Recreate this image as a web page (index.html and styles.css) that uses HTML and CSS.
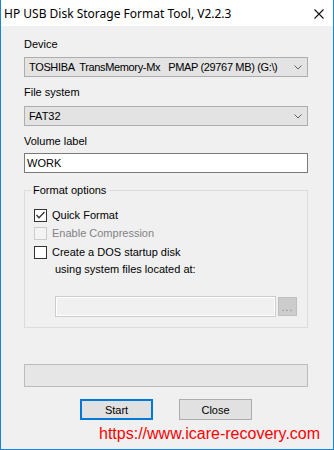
FILE: index.html
```html
<!DOCTYPE html>
<html lang="en">
<head>
    <meta charset="UTF-8">
    <title>HP USB Disk Storage Format Tool</title>
    <link rel="stylesheet" href="styles.css">
</head>
<body>

<div class="window">
    <div class="titlebar">
        <span class="title">HP USB Disk Storage Format Tool, V2.2.3</span>
        <svg class="close-icon" width="10" height="10" viewBox="0 0 10 10">
            <path d="M0.5 0.5 L9.5 9.5 M9.5 0.5 L0.5 9.5" stroke="#111" stroke-width="1.1" fill="none"/>
        </svg>
    </div>

    <div class="dialog">
        <div class="label first">Device</div>
        <div class="combo">
            <span class="combo-text device">TOSHIBA  TransMemory-Mx   PMAP (29767 MB) (G:\)</span>
            <svg class="chevron" width="8" height="5" viewBox="0 0 8 5">
                <path d="M0.5 0.5 L4 4 L7.5 0.5" stroke="#606060" stroke-width="1" fill="none"/>
            </svg>
        </div>

        <div class="label">File system</div>
        <div class="combo">
            <span class="combo-text">FAT32</span>
            <svg class="chevron" width="8" height="5" viewBox="0 0 8 5">
                <path d="M0.5 0.5 L4 4 L7.5 0.5" stroke="#606060" stroke-width="1" fill="none"/>
            </svg>
        </div>

        <div class="label">Volume label</div>
        <div class="textbox">WORK</div>

        <!-- Format options -->
        <fieldset class="group">
            <legend>Format options</legend>
            <div class="check-row row-1">
                <span class="checkbox">
                    <svg width="11" height="11" viewBox="0 0 11 11">
                        <path d="M1.5 5 L4 7.8 L9.5 2" stroke="#333" stroke-width="1.3" fill="none"/>
                    </svg>
                </span>
                <span>Quick Format</span>
            </div>
            <div class="check-row row-2 disabled">
                <span class="checkbox"></span>
                <span>Enable Compression</span>
            </div>
            <div class="check-row row-3">
                <span class="checkbox"></span>
                <span>Create a DOS startup disk</span>
            </div>
            <div class="sub-text">using system files located at:</div>
            <div class="path-row">
                <div class="path-input"></div>
                <div class="browse">...</div>
            </div>
        </fieldset>

        <div class="progress"></div>

        <div class="buttons">
            <button class="btn btn-default">Start</button>
            <button class="btn">Close</button>
        </div>

        <div class="url">https://www.icare-recovery.com</div>
    </div>
</div>

</body>
</html>
```

FILE: styles.css
```css
body {
    margin: 0;
    font-family: "Liberation Sans", Arial, sans-serif;
    font-size: 11px;
    color: #000000;
    background-color: #f0f0f0;
}

.window {
    width: 334px;
    height: 450px;
    box-sizing: border-box;
    border: 1px solid #1883d7;
    border-top: none;
    background-color: #f0f0f0;
    display: flex;
    flex-direction: column;
}

.titlebar {
    height: 26px;
    background-color: #ffffff;
    display: flex;
    align-items: center;
    justify-content: space-between;
    padding-left: 3px;
}

.title {
    font-family: "Noto Sans", sans-serif;
    font-size: 12px;
    color: #000000;
}

.close-icon {
    margin-right: 9px;
    margin-top: 1px;
}

.dialog {
    padding: 0 25px 0 23px;
    display: flex;
    flex-direction: column;
}

.label {
    line-height: 13px;
    margin-top: 9px;
}

.label.first {
    margin-top: 12px;
}

.combo {
    margin-top: 7px;
    height: 20px;
    box-sizing: border-box;
    border: 1px solid #adadad;
    background-color: #e3e3e3;
    display: flex;
    align-items: center;
    justify-content: space-between;
    padding: 0 5px 0 4px;
}

.label.first + .combo {
    margin-top: 6px;
}

.combo-text {
    white-space: pre;
}

.combo-text.device {
    letter-spacing: -0.35px;
}

.textbox {
    margin-top: 5px;
    height: 20px;
    box-sizing: border-box;
    border: 1px solid #7a7a7a;
    background-color: #ffffff;
    display: flex;
    align-items: center;
    padding-left: 2px;
}

.group {
    margin: 11px 0 0 0;
    padding: 0 0 10px 7px;
    border: 1px solid #dcdcdc;
    min-width: 0;
}

.group legend {
    padding: 0 3px 0 2px;
    line-height: 13px;
    margin-left: -1px;
}

.check-row {
    display: flex;
    align-items: center;
    gap: 5px;
    height: 13px;
    line-height: 13px;
    margin-left: 2px;
}

.row-1 {
    margin-top: 12px;
}

.row-2 {
    margin-top: 5px;
}

.row-3 {
    margin-top: 6px;
}

.checkbox {
    width: 13px;
    height: 13px;
    box-sizing: border-box;
    border: 1px solid #333333;
    background-color: #ffffff;
    display: flex;
    align-items: center;
    justify-content: center;
}

.disabled {
    color: #838383;
}

.disabled .checkbox {
    border-color: #cccccc;
    background-color: #f3f3f3;
}

.sub-text {
    margin-top: 4px;
    margin-left: 23px;
    line-height: 13px;
}

.path-row {
    margin-top: 20px;
    margin-left: 23px;
    display: flex;
    align-items: center;
    gap: 2px;
}

.path-input {
    width: 221px;
    height: 21px;
    box-sizing: border-box;
    border: 1px solid #cccccc;
    box-shadow: inset 0 0 0 1px #ffffff;
    background-color: #f0f0f0;
}

.browse {
    width: 19px;
    height: 19px;
    box-sizing: border-box;
    border: 1px solid #bfbfbf;
    background-color: #cccccc;
    color: #838383;
    display: flex;
    align-items: center;
    justify-content: center;
    font-size: 10px;
    letter-spacing: 1px;
    padding-top: 1px;
}

.progress {
    margin-top: 36px;
    height: 23px;
    box-sizing: border-box;
    border: 1px solid #bcbcbc;
    background-color: #e6e6e6;
}

.buttons {
    margin-top: 12px;
    padding-left: 56px;
    display: flex;
    gap: 26px;
}

.btn {
    width: 73px;
    height: 21px;
    box-sizing: border-box;
    border: 1px solid #adadad;
    background-color: #e1e1e1;
    font-family: "Liberation Sans", Arial, sans-serif;
    font-size: 11px;
    color: #000000;
    padding: 0;
    margin: 0;
}

.btn-default {
    border: 2px solid #0078d7;
}

.url {
    margin-top: 5px;
    margin-left: 75px;
    margin-right: -18px;
    font-family: "Liberation Sans", Arial, sans-serif;
    font-size: 16px;
    line-height: 18px;
    color: #ff0000;
    white-space: nowrap;
}
```
